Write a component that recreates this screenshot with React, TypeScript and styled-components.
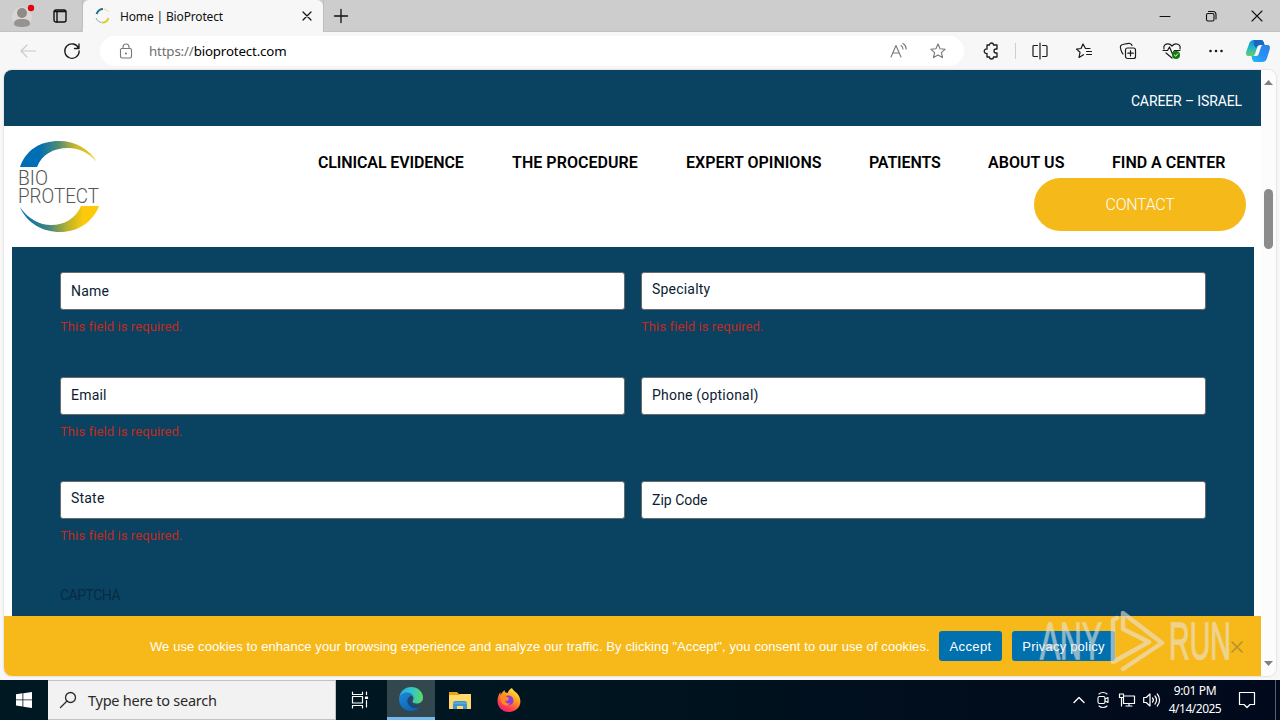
import React from "react";
import styled, { createGlobalStyle } from "styled-components";

const Global = createGlobalStyle`
  *, *::before, *::after { box-sizing: border-box; }
  body { margin: 0; overflow: hidden; font-family: "Noto Sans", sans-serif; color: #111; }
  svg { display: block; flex: none; overflow: visible; }
`;

const site = `Roboto, "Liberation Sans", sans-serif`;
const system = `"Noto Sans", "Open Sans", sans-serif`;

const Desktop = styled.div`
  width: 1280px;
  height: 720px;
  display: flex;
  flex-direction: column;
  overflow: hidden;
  position: relative;
  background: #f7f7f7;
`;

const Label = styled.span<{ $ls?: number }>`
  white-space: nowrap;
  letter-spacing: ${(p) => p.$ls ?? 0}px;
`;

/* Browser chrome */
const TabStrip = styled.div`
  height: 32px;
  flex: none;
  display: flex;
  background: #cdcdcd;
  border-bottom: 1px solid #c2c2c2;
`;
const StripTools = styled.div`
  width: 83px;
  height: 32px;
  display: flex;
  align-items: center;
  padding-left: 13px;
  gap: 18px;
  border-bottom-right-radius: 6px;
  border-right: 1px solid #bdbdbd;
`;
const Tab = styled.div`
  width: 240px;
  height: 32px;
  display: flex;
  align-items: center;
  padding: 0 9px 0 12px;
  background: #f7f7f7;
  border-radius: 6px 6px 0 0;
  font: 12px ${system};
`;
const TabTitle = styled(Label)`
  flex: 1;
  padding-left: 10px;
`;
const NewTab = styled.div`
  width: 34px;
  display: flex;
  align-items: center;
  justify-content: center;
  border-left: 1px solid #bdbdbd;
`;
const WindowControls = styled.div`
  margin-left: auto;
  display: flex;
`;
const ControlButton = styled.div`
  width: 46px;
  display: flex;
  align-items: center;
  justify-content: center;
`;
const Toolbar = styled.div`
  height: 38px;
  flex: none;
  display: flex;
  align-items: center;
  padding-left: 6px;
  background: #f7f7f7;
`;
const ToolButton = styled.div<{ $w?: number; $color?: string }>`
  width: ${(p) => p.$w ?? 44}px;
  height: 38px;
  display: flex;
  align-items: center;
  justify-content: center;
  color: ${(p) => p.$color ?? "#1b1b1b"};
`;
const AddressBar = styled.div`
  width: 864px;
  height: 30px;
  margin: 0 5px 0 6px;
  padding: 0 17px 0 18px;
  display: flex;
  align-items: center;
  border-radius: 15px;
  background: #fff;
  color: #777;
  font: 13.3px ${system};
`;
const Url = styled(Label)`
  flex: 1;
  padding-left: 15px;
  color: #6e6e6e;
  b { font-weight: 400; color: #000; }
`;
const AddressIcons = styled.div`
  display: flex;
  gap: 22px;
`;
const Divider = styled.div`
  width: 1px;
  height: 16px;
  margin: 0 2px;
  background: #cfcfcf;
`;

/* Page */
const Viewport = styled.div`
  height: 606px;
  flex: none;
  margin: 0 4px;
  display: flex;
  background: #fff;
  border-radius: 8px;
  overflow: hidden;
  box-shadow: 0 0 2px #bbb;
`;
const Page = styled.main`
  width: 1257px;
  display: flex;
  flex-direction: column;
  font-family: ${site};
`;
const TopBar = styled.div`
  height: 56px;
  display: flex;
  align-items: center;
  justify-content: flex-end;
  padding: 6px 19px 0 0;
  background: #0a4262;
  color: #fff;
  font-size: 14px;
`;
const Header = styled.header`
  height: 121px;
  display: flex;
  justify-content: space-between;
  padding: 15px 15px 0 14px;
`;
const HeaderRight = styled.div`
  display: flex;
  flex-direction: column;
  align-items: flex-end;
`;
const Nav = styled.nav`
  height: 37px;
  display: flex;
  align-items: center;
  padding: 5px 21px 0 0;
  color: #000;
  font-size: 16px;
  font-weight: 600;
`;
const NavItem = styled(Label)<{ $w: number }>`
  width: ${(p) => p.$w}px;
  margin-left: 48px;
`;
const ContactButton = styled.div`
  width: 212px;
  height: 53px;
  display: flex;
  align-items: center;
  justify-content: center;
  border-radius: 27px;
  background: #f5b91a;
  color: #fff;
  font-size: 16px;
  font-weight: 300;
`;
const FormPanel = styled.section`
  height: 369px;
  margin: 0 7px 0 8px;
  padding: 25px 48px 0;
  background: #0a4262;
`;
const Fields = styled.div`
  display: grid;
  grid-template-columns: 565px 565px;
  grid-template-rows: 105px 104px 104px;
  column-gap: 16px;
`;
const Input = styled.div<{ $lift: number }>`
  height: 38px;
  display: flex;
  align-items: center;
  padding: 0 10px ${(p) => p.$lift}px;
  border: 1px solid #6b6b6b;
  border-radius: 3px;
  background: #fff;
  color: #0b1c33;
  font-size: 14px;
`;
const ErrorText = styled.div`
  margin-top: 8px;
  color: #c02b1e;
  font-size: 13px;
  line-height: 17px;
`;
const Captcha = styled.div`
  color: #072b42;
  font-size: 14px;
  line-height: 20px;
`;
const CookieBar = styled.div`
  height: 60px;
  display: flex;
  align-items: center;
  padding-left: 146px;
  background: #f7b919;
  color: #fff;
  font: 13px "Liberation Sans", sans-serif;
`;
const CookieText = styled(Label)`
  width: 789px;
`;
const CookieButton = styled.div<{ $w: number }>`
  width: ${(p) => p.$w}px;
  height: 30px;
  margin-right: 10px;
  display: flex;
  align-items: center;
  justify-content: center;
  border-radius: 3px;
  background: #0071ae;
`;
const CookieClose = styled.div`
  margin: 2px 18px 0 auto;
`;
const Scrollbar = styled.div`
  width: 15px;
  display: flex;
  flex-direction: column;
  align-items: center;
  padding: 10px 0;
  background: #fcfcfc;
`;
const Thumb = styled.div`
  width: 9px;
  height: 60px;
  margin: 104px 0 auto;
  border-radius: 5px;
  background: #8b8b8b;
`;

/* Taskbar */
const Taskbar = styled.footer`
  height: 40px;
  flex: none;
  margin-top: 4px;
  display: flex;
  background: linear-gradient(90deg, #001822 0%, #001520 45%, #010c1c 80%, #010a1c 100%);
  color: #fff;
`;
const TaskItem = styled.div<{ $w: number; $active?: boolean }>`
  width: ${(p) => p.$w}px;
  display: flex;
  align-items: center;
  justify-content: center;
  background: ${(p) => (p.$active ? "#33474f" : "transparent")};
  border-bottom: ${(p) => (p.$active ? "3px solid #76b9ed" : "0")};
`;
const Search = styled.div`
  width: 288px;
  display: flex;
  align-items: center;
  gap: 12px;
  padding-left: 12px;
  background: #f2f2f2;
  border: 1px solid #bfc3c5;
  border-left: 0;
  color: #2a2a2a;
  font: 14.5px ${system};
`;
const Tray = styled.div`
  margin-left: auto;
  display: flex;
`;
const Clock = styled.div`
  width: 64px;
  display: flex;
  flex-direction: column;
  align-items: center;
  padding-top: 2px;
  font: 12px/18px ${system};
`;
const ShowDesktop = styled.div`
  width: 5px;
  margin-left: 8px;
  border-left: 1px solid #56606b;
`;
const Watermark = styled.div`
  position: absolute;
  left: 1038px;
  top: 608px;
  opacity: 0.6;
`;

type IconProps = { w?: number; h?: number; sw?: number; children: React.ReactNode };
const Icon = ({ w = 16, h = w, sw = 1.1, children }: IconProps) => (
  <svg width={w} height={h} viewBox={`0 0 ${w} ${h}`} fill="none" stroke="currentColor" strokeWidth={sw} strokeLinecap="round" strokeLinejoin="round">
    {children}
  </svg>
);

const Avatar = () => (
  <svg width="22" height="26" viewBox="0 0 22 26">
    <circle cx="9" cy="14" r="10" fill="#d9d6d4" />
    <circle cx="9" cy="10" r="5" fill="#8d8a88" />
    <path d="M1 21c0-4 3-5 8-5s8 1 8 5c0 2-4 3-8 3s-8-1-8-3z" fill="#969290" />
    <circle cx="18" cy="5" r="3.2" fill="#e3000f" />
  </svg>
);

const Favicon = () => (
  <svg width="15" height="16" viewBox="0 0 15 16" fill="none" strokeWidth="2">
    <path d="M1.5 6C3 2.500 5 1 8 1" stroke="#2b6d8e" />
    <path d="M9 1c2 .3 3.500 1.500 4.500 3" stroke="#e6dc7a" strokeWidth="1" />
    <path d="M1 10c1 2.500 3 4 5.500 4.500" stroke="#7fa9a0" strokeWidth="1" />
    <path d="M7 14.700c3 0 5.500-1.700 6.500-4.700" stroke="#d9cf2c" />
  </svg>
);

const Copilot = () => (
  <svg width="24" height="22" viewBox="0 0 24 22">
    <defs>
      <linearGradient id="cpA" x1="0" y1="0" x2="0" y2="1">
        <stop offset="0" stopColor="#1391dc" /><stop offset=".5" stopColor="#26b6c4" /><stop offset="1" stopColor="#62d26f" />
      </linearGradient>
      <linearGradient id="cpB" x1="1" y1="0" x2="0" y2="1">
        <stop offset="0" stopColor="#2e7fe8" /><stop offset=".5" stopColor="#2a8ef5" /><stop offset="1" stopColor="#1fc0f5" />
      </linearGradient>
    </defs>
    <path d="M8 0h7c2 0 3 2 3.500 5H14c-2 0-2.500 1-3 3l-2 6c-.7 2-1.500 2-3 2H3c-3 0-3.500-2-2.500-5L3 4c1-3 2.500-4 5-4z" fill="url(#cpA)" />
    <path d="M8 0h7c2 0 3 2 3.500 5H14c-2 0-2.500 1-3 2l-1 1C8 6 7 3 8 0z" fill="#1766c4" />
    <path d="M16 22H9c-2 0-3-2-3.500-6H10c2 0 2.500-1 3-3l2-6c.7-2 1.500-2 3-2h3c3 0 3.500 2 2.500 5L21 18c-1 3-2.500 4-5 4z" fill="url(#cpB)" />
  </svg>
);

const Logo = () => (
  <svg width="82" height="92" viewBox="0 0 82 92">
    <defs>
      <linearGradient id="arcTop"><stop offset=".25" stopColor="#006eb5" /><stop offset=".5" stopColor="#4f8c73" /><stop offset=".72" stopColor="#c9b82c" /><stop offset="1" stopColor="#f4cf25" /></linearGradient>
      <linearGradient id="arcBottom"><stop offset="0" stopColor="#006eb5" /><stop offset=".35" stopColor="#3e8480" /><stop offset=".6" stopColor="#b9b32c" /><stop offset=".8" stopColor="#fdc90a" /></linearGradient>
    </defs>
    <path d="M2 26C8 9 22 0 41 0c17 0 30 8 38 21C70 11 60 7 50 7 36 7 24 13 19 26z" fill="url(#arcTop)" />
    <path d="M2 66c8 12 20 18 31 18 14 0 25-7 30-19h18C75 81 60 91 42 91 24 91 9 82 2 66z" fill="url(#arcBottom)" />
    <g fontFamily={site} fontWeight="300" fontSize="19.500" fill="#555">
      <text x="0" y="44" textLength="30" lengthAdjust="spacingAndGlyphs">BIO</text>
      <text x="0" y="62" textLength="81" lengthAdjust="spacingAndGlyphs">PROTECT</text>
    </g>
  </svg>
);

const Edge = () => (
  <svg width="24" height="24" viewBox="0 0 24 24">
    <defs>
      <linearGradient id="edT"><stop offset="0" stopColor="#2aa9dd" /><stop offset=".5" stopColor="#2fc3cf" /><stop offset="1" stopColor="#5fdb62" /></linearGradient>
      <linearGradient id="edB" x1="0" y1="0" x2="1" y2="1"><stop offset="0" stopColor="#1a8ada" /><stop offset="1" stopColor="#0c59a4" /></linearGradient>
    </defs>
    <path d="M.3 11C1 4 6 0 12 0c7 0 12 5 12 10.500 0 4-3 6-6.500 6-2.500 0-4-1-4-2 0-.8 1-1.200 1-3C14.500 8 11 6 8 6 4 6 1.500 8 .3 11z" fill="url(#edT)" />
    <path d="M0 12c.5-4 4-6.500 8-6.500 3.500 0 6.500 2.500 6.500 6 0-1.500-1-2.500-2.500-2.500-2 0-3.500 2.500-3.500 5 0 4 4 7 8 7 2 0 4-.8 5.500-2C20 22 16 24 12 24 5 24 0 18.500 0 12z" fill="url(#edB)" />
    <path d="M8.500 13c-.5 5 4 8.500 8.500 8 2-.2 4-1 5-2-2 1-6 1-8.500-1-2.500-1.800-2.500-4-1.500-6-2-.5-3 0-3.500 1z" fill="#114a8b" />
  </svg>
);

const Explorer = () => (
  <svg width="22" height="19" viewBox="0 0 22 19">
    <path d="M0 1h8l2 2h12v4H0z" fill="#e9a21b" />
    <path d="M0 4h10l1-1h11v15H0z" fill="#ffd969" />
    <path d="M4 18v-6c0-1 1-2 2-2h10c1 0 2 1 2 2v6h-4v-3H8v3z" fill="#3f96d2" />
    <path d="M4 12h14" stroke="#70b5df" />
  </svg>
);

const Firefox = () => (
  <svg width="24" height="24" viewBox="0 0 24 24">
    <defs>
      <linearGradient id="fx" x1=".8" y1="0" x2=".2" y2="1"><stop offset="0" stopColor="#fff04a" /><stop offset=".4" stopColor="#ff9a1f" /><stop offset=".75" stopColor="#ff3d4f" /><stop offset="1" stopColor="#e5198c" /></linearGradient>
    </defs>
    <path d="M15 0c1 3 5 4 7 8 4 8-1 16-10 16C5 24 .5 19 .5 13c0-4 1-6 3-9v3c1-2 3-4 4-5 0 2 1 3 3 3 1-2 2-4 4.500-5z" fill="url(#fx)" />
    <path d="M8 9c2-2 5-2 7 0 3 3 1 8-3 8-3 0-5-2-5-4 2 1 4 0 5-2-1.500 0-3-1-4-2z" fill="#8b3ddb" />
    <path d="M3 9c2-3 5-2 7 0l2 1c-1 2-3 2-4 2 0 3 3 4 5 3-2 4-8 3-9-2z" fill="#ff8b25" />
  </svg>
);

const WatermarkArt = () => (
  <svg width="196" height="66" viewBox="0 0 196 66" fill="none">
    <g fontFamily={`"Liberation Sans", sans-serif`} fontSize="51" fill="#e9e4dc" stroke="#e9e4dc" strokeWidth="1.300">
      <text x="2" y="51" textLength="62" lengthAdjust="spacingAndGlyphs">ANY</text>
      <text x="131" y="51" textLength="62" lengthAdjust="spacingAndGlyphs">RUN</text>
    </g>
    <path
      d="M79 10L75 12v42l36-20-26-13V5l39 30-39 26"
      stroke="#e9e4dc" strokeWidth="4.500" strokeLinejoin="round" strokeLinecap="round"
    />
  </svg>
);

const navItems: [string, number, number][] = [
  ["CLINICAL EVIDENCE", 146, -0.12],
  ["THE PROCEDURE", 126, 0.05],
  ["EXPERT OPINIONS", 135, 0],
  ["PATIENTS", 71, -0.15],
  ["ABOUT US", 76, 0.05],
  ["FIND A CENTER", 113, 0],
];

const fields = [
  { label: "Name", lift: 0, required: true },
  { label: "Specialty", lift: 4, required: true },
  { label: "Email", lift: 2, required: true },
  { label: "Phone (optional)", lift: 2, required: false },
  { label: "State", lift: 4, required: true },
  { label: "Zip Code", lift: 1, required: false },
];

const star = "M9 1l2.100 4.700 5.100.5-3.800 3.400 1.100 5L9 12l-4.500 2.600 1.100-5L1.800 6.200l5.100-.5z";

export default function App() {
  return (
    <Desktop>
      <Global />
      <TabStrip>
        <StripTools>
          <Avatar />
          <Icon w={14} h={14} sw={1.4}><rect x="1" y="1" width="12" height="12" rx="2" /><path d="M1.500 2.500h11M4 3v10" /></Icon>
        </StripTools>
        <Tab>
          <Favicon />
          <TabTitle $ls={-0.15}>Home | BioProtect</TabTitle>
          <Icon w={14} h={14} sw={1.2}><path d="M3 3l8 8M11 3l-8 8" /></Icon>
        </Tab>
        <NewTab><Icon w={14} h={14} sw={1.3}><path d="M7 .5v13M.5 7h13" /></Icon></NewTab>
        <WindowControls>
          <ControlButton><Icon w={10} h={10} sw={1}><path d="M0 5.500h10" /></Icon></ControlButton>
          <ControlButton><Icon w={10} h={10}><rect x=".5" y="2.500" width="7.500" height="7.500" rx="1.500" /><path d="M2.500.5H7c2 0 3 1 3 3v4.500" /></Icon></ControlButton>
          <ControlButton><Icon w={10} h={10}><path d="M0 0l10 10M10 0L0 10" /></Icon></ControlButton>
        </WindowControls>
      </TabStrip>

      <Toolbar>
        <ToolButton $color="#c8c8c8"><Icon><path d="M15.500 8H1M7 2L1 8l6 6" /></Icon></ToolButton>
        <ToolButton><Icon sw={1.3}><path d="M14.600 5.200A7.200 7.200 0 1 0 15.200 8M15 1v4.500h-4.500" /></Icon></ToolButton>
        <AddressBar>
          <Icon><rect x="2.500" y="5.500" width="11" height="9.500" rx="1.500" /><path d="M5 5.500V4a3 3 0 0 1 6 0v1.500" /><circle cx="8" cy="10.500" r=".5" fill="currentColor" /></Icon>
          <Url $ls={-0.15}>https://<b>bioprotect.com</b></Url>
          <AddressIcons>
            <Icon><path d="M0 14L5 2.500 10 14M1.800 10h6.400M10 2.500c1.300.8 2 2 2 3.500M12 .5c2 1.200 3.200 3 3.200 5.500" /></Icon>
            <Icon w={18} h={16}><path d={star} /></Icon>
          </AddressIcons>
        </AddressBar>
        <ToolButton><Icon sw={1.3}><path d="M4 2h2.500a2 2 0 0 1 4 0H14v4h-1a2 2 0 0 0 0 4h1v4h-3.500a2 2 0 0 1-4 0H4V10.500a2.300 2.300 0 1 1 0-4.500z" /></Icon></ToolButton>
        <Divider />
        <ToolButton><Icon sw={1.2}><path d="M5.500 2.500H2A1 1 0 0 0 1 3.500v9a1 1 0 0 0 1 1h3.500M8 0v16M10.500 2.500H14a1 1 0 0 1 1 1v9a1 1 0 0 1-1 1h-3.500" /></Icon></ToolButton>
        <ToolButton><Icon sw={1.2}><path d="M14 5.500H9.500L7 1 5 5.500l-4.500.6L4 9.300 3 14.500l4.500-2.800M10.500 8.500h5M10.500 11.500h5" /></Icon></ToolButton>
        <ToolButton><Icon sw={1.2}><rect x="5.500" y="5" width="10" height="10.500" rx="2" /><path d="M10.500 7.500v5.500M7.800 10.200h5.500M3 11C1.500 10 0 4.500.5 3s8-3 9.500-2.500 1.500 1 2 2" /></Icon></ToolButton>
        <ToolButton>
          <Icon w={18} h={16} sw={1.2}>
            <path d="M1 6C0 2.500 2.500.8 5 .8c2 0 3 1 4 2.200 1-1.200 2-2.200 4-2.200 2.500 0 5 2 4 5.200M3 10l6 5M0 7.500h4.500L6.500 4l3 7 2-3.500h5.500" />
            <circle cx="13" cy="12" r="4" fill="#117d10" stroke="none" /><path d="M11.300 12l1.300 1.200 2.200-2.400" stroke="#fff" strokeWidth="1" />
          </Icon>
        </ToolButton>
        <ToolButton><Icon w={14} h={4}><g fill="currentColor" stroke="none"><circle cx="1.500" cy="2" r="1.300" /><circle cx="7" cy="2" r="1.300" /><circle cx="12.500" cy="2" r="1.300" /></g></Icon></ToolButton>
        <ToolButton $w={40}><Copilot /></ToolButton>
      </Toolbar>

      <Viewport>
        <Page>
          <TopBar><Label $ls={-0.12}>CAREER – ISRAEL</Label></TopBar>
          <Header>
            <Logo />
            <HeaderRight>
              <Nav>{navItems.map(([t, w, ls]) => <NavItem key={t} $w={w} $ls={ls}>{t}</NavItem>)}</Nav>
              <ContactButton><Label $ls={-0.3}>CONTACT</Label></ContactButton>
            </HeaderRight>
          </Header>
          <FormPanel>
            <Fields>
              {fields.map((f) => (
                <div key={f.label}>
                  <Input $lift={f.lift}><Label $ls={f.label === "Zip Code" ? 0 : 0.2}>{f.label}</Label></Input>
                  {f.required && <ErrorText><Label $ls={0.1}>This field is required.</Label></ErrorText>}
                </div>
              ))}
            </Fields>
            <Captcha><Label $ls={-0.5}>CAPTCHA</Label></Captcha>
          </FormPanel>
          <CookieBar>
            <CookieText $ls={0.087}>We use cookies to enhance your browsing experience and analyze our traffic. By clicking "Accept", you consent to our use of cookies.</CookieText>
            <CookieButton $w={63}><Label $ls={0.4}>Accept</Label></CookieButton>
            <CookieButton $w={103}><Label $ls={0.2}>Privacy policy</Label></CookieButton>
            <CookieClose><Icon w={12} h={12} sw={1.6}><path d="M1 1l10 10M11 1L1 11" stroke="#b58f35" /></Icon></CookieClose>
          </CookieBar>
        </Page>
        <Scrollbar>
          <svg width="9" height="5"><path d="M0 5l4.500-5L9 5z" fill="#808080" /></svg>
          <Thumb />
          <svg width="9" height="5"><path d="M0 0l4.500 5L9 0z" fill="#808080" /></svg>
        </Scrollbar>
      </Viewport>

      <Taskbar>
        <TaskItem $w={48}>
          <svg width="16" height="16" viewBox="0 0 16 16" fill="#fff"><path d="M0 2.200L6.500 1.300v6.200H0zM7.300 1.200L16 0v7.500H7.300zM0 8.300h6.500v6.200L0 13.600zM7.300 8.300H16V16l-8.700-1.300z" /></svg>
        </TaskItem>
        <Search>
          <Icon w={16} h={16} sw={1.3}><circle cx="10.500" cy="5.500" r="5" /><path d="M7 9l-6.500 6.500" /></Icon>
          <Label $ls={-0.25}>Type here to search</Label>
        </Search>
        <TaskItem $w={48}>
          <Icon w={18} h={16} sw={1.2}><path d="M1.500 0v2.500h10V0M1.500 16v-2.500h10V16M15.500 0v2.500M15.500 8.500V15" /><rect x="1.500" y="4.500" width="10" height="6.500" /><path d="M14.500 5h2v1.500h-2z" fill="currentColor" /></Icon>
        </TaskItem>
        <TaskItem $w={3} />
        <TaskItem $w={48} $active><Edge /></TaskItem>
        <TaskItem $w={50}><Explorer /></TaskItem>
        <TaskItem $w={48}><Firefox /></TaskItem>
        <Tray>
          <TaskItem $w={24}><Icon w={12} h={8} sw={1.4}><path d="M1 6.500l5-5 5 5" /></Icon></TaskItem>
          <TaskItem $w={24}><Icon w={12} h={16}><rect x="1" y="4.500" width="7" height="7" rx="1.500" /><path d="M8 7l3-1.500v5L8 9M2 2c2-2 6-2 8 0M2 14c2 2 6 2 8 0" /></Icon></TaskItem>
          <TaskItem $w={24}><Icon w={16} h={14} sw={1.2}><path d="M5 3h10.500v7.500H4.500V5M10 10.500V13M7 13h6M.5 1h4v3.500h-4zM2.500 4.500V13" /></Icon></TaskItem>
          <TaskItem $w={24}><Icon w={17} h={14} sw={1.2}><path d="M.7 4.500h2.500L7 1v12L3.200 9.500H.7zM9.500 5c1 1.200 1 3 0 4M12 3c2 2.200 2 6 0 8M14.300 1c3 3.500 3 8.500 0 12" /></Icon></TaskItem>
          <Clock><Label $ls={-0.35}>9:01 PM</Label><Label $ls={-0.5}>4/14/2025</Label></Clock>
          <TaskItem $w={40}><Icon w={16} h={16} sw={1.2}><path d="M.5.500h15v12H11L8 15.500l-3-3H.5z" /></Icon></TaskItem>
          <ShowDesktop />
        </Tray>
      </Taskbar>
      <Watermark><WatermarkArt /></Watermark>
    </Desktop>
  );
}
